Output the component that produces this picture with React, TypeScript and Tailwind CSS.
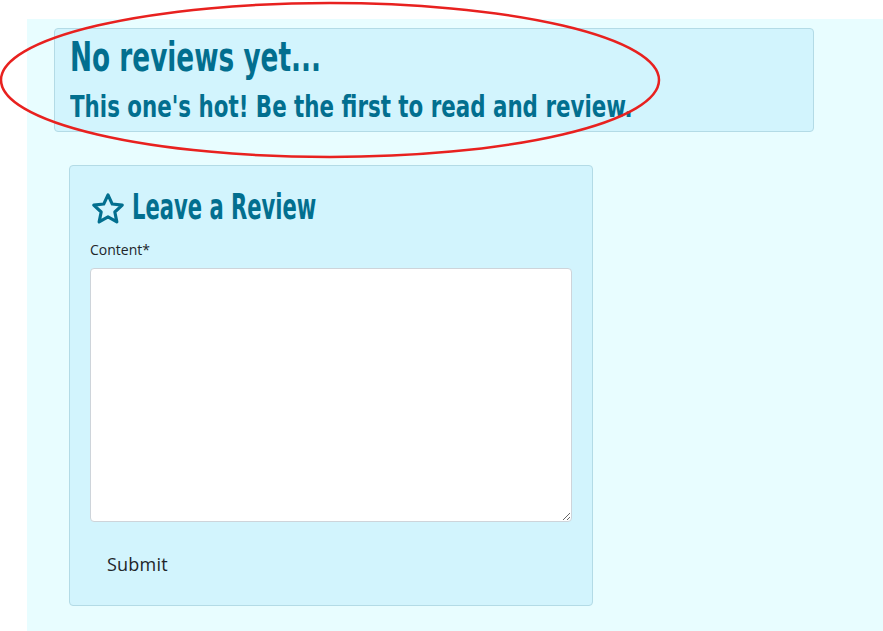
import React from 'react';

const condensed = { fontFamily: '"DejaVu Sans Condensed", "DejaVu Sans", sans-serif' };

function StarIcon() {
    return (
        <svg className="w-[36px] h-[36px]" viewBox="0 0 24 24" fill="none" stroke="currentColor" strokeWidth="2.1" strokeLinejoin="round">
            <path d="M12 2.6l2.85 6.1 6.65.75-4.95 4.55 1.35 6.6L12 17.3l-5.9 3.3 1.35-6.6L2.5 9.45l6.65-.75z" />
        </svg>
    );
}

export default function App() {
    return (
        <div className="relative min-h-[631px] bg-white pt-[19px] pl-[27px] overflow-hidden">
            <div className="min-h-[612px] bg-[#e8fdff] pt-[9px] pl-[27px]">
                {/* empty state */}
                <div className="w-[760px] h-[104px] rounded border border-[#b3dbe6] bg-[#d2f4fd] px-[15px] text-[#026f8f] font-stretch-condensed" style={condensed}>
                    <h2 className="text-[41px] leading-[52px] font-bold mt-[2px] whitespace-nowrap">
                        <span className="inline-block origin-left scale-x-[0.714]">No reviews yet...</span>
                    </h2>
                    <h3 className="mt-[3px] text-[31px] leading-[40px] font-bold whitespace-nowrap">
                        <span className="inline-block origin-left scale-x-[0.767]">This one's hot! Be the first to read and review.</span>
                    </h3>
                </div>

                {/* review form */}
                <div className="mt-[33px] ml-[15px] w-[524px] h-[441px] rounded border border-[#b3dbe6] bg-[#d2f4fd] px-[20px] pt-[21px]">
                    <h4 className="flex items-center gap-[6px] text-[#026f8f] text-[35px] leading-[44px] font-bold font-stretch-condensed whitespace-nowrap" style={condensed}>
                        <StarIcon />
                        <span className="inline-block origin-left scale-x-[0.67] -translate-y-[2px]">Leave a Review</span>
                    </h4>
                    <label className="block mt-[9px] text-[14px] leading-[20px] text-[#212529]" style={{ fontFamily: '"Open Sans", "Noto Sans", sans-serif' }}>
                        Content*
                    </label>
                    <textarea className="block mt-[8px] w-[482px] h-[254px] rounded border border-[#ced4da] bg-white resize-y" />
                    <button className="mt-[22px] px-[17px] py-[6px] text-[18px] leading-[28px] text-[#212529] tracking-[0.2px]" style={{ fontFamily: '"Open Sans", "Noto Sans", sans-serif' }}>
                        Submit
                    </button>
                </div>
            </div>

            {/* annotation */}
            <svg className="absolute left-0 top-0 pointer-events-none" width="883" height="631">
                <ellipse cx="330" cy="80" rx="329" ry="77" fill="none" stroke="#e8211f" strokeWidth="2.5" />
            </svg>
        </div>
    );
}
